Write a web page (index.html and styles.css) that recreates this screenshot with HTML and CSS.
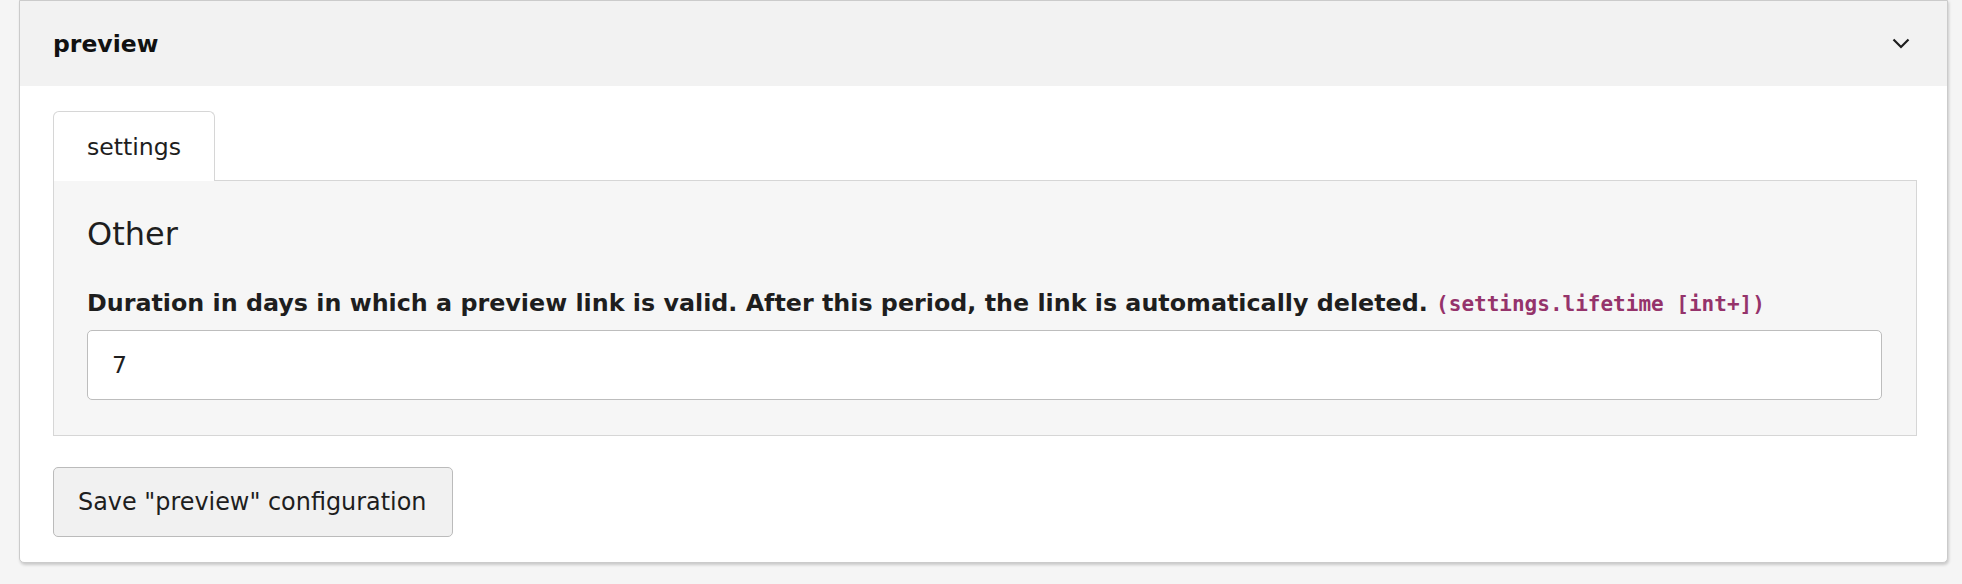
FILE: index.html
```html
<!DOCTYPE html>
<html lang="en">
<head>
<meta charset="utf-8">
<title>preview</title>
<link rel="stylesheet" href="styles.css">
</head>
<body>
<div class="page">
  <div class="card">
    <div class="card-header">
      <span class="card-title">preview</span>
      <svg class="chevron" width="18" height="11" viewBox="0 0 18 11"><polyline points="1.5,1.5 9,9 16.5,1.5" fill="none" stroke="#1e1e1e" stroke-width="2.2"/></svg>
    </div>
    <div class="card-body">
      <div class="tabs">
        <div class="tab active">settings</div>
      </div>
      <div class="tab-panel">
        <h2 class="section-title">Other</h2>
        <label class="field-label">Duration in days in which a preview link is valid. After this period, the link is automatically deleted. <code class="field-key">(settings.lifetime [int+])</code></label>
        <input class="field-input" type="text" value="7">
      </div>
      <button class="save-btn" type="button">Save "preview" configuration</button>
    </div>
  </div>
</div>
</body>
</html>
```

FILE: styles.css
```css
html, body {
  margin: 0;
  padding: 0;
  background: #f5f5f5;
}

body {
  font-family: Verdana, "DejaVu Sans", sans-serif;
  font-size: 23.6px;
  color: #1e1e1e;
}

.page {
  padding: 0 14px 22px 19px;
}

.card {
  background: #ffffff;
  border: 1px solid #cbcbcb;
  border-radius: 0 0 5px 5px;
  box-shadow: 1px 2px 3px rgba(0, 0, 0, 0.18);
}

.card-header {
  height: 85px;
  background: #f2f2f2;
  display: flex;
  align-items: center;
  justify-content: space-between;
  padding: 0 37px 0 33px;
}

.card-title {
  font-weight: bold;
  color: #111;
  font-size: 23.5px;
}

.chevron {
  display: block;
}

.card-body {
  padding: 25px 30px 25px 33px;
}

.tabs {
  display: flex;
}

.tab {
  background: #ffffff;
  border: 1px solid #d6d6d6;
  border-bottom: none;
  border-radius: 6px 6px 0 0;
  height: 70px;
  box-sizing: border-box;
  padding: 0 33px;
  display: flex;
  align-items: center;
  margin-bottom: -1px;
  position: relative;
  z-index: 1;
}

.tab-panel {
  background: #f6f6f6;
  border: 1px solid #d6d6d6;
  padding: 34px 34px 35px 33px;
}

.section-title {
  font-size: 32px;
  font-weight: normal;
  line-height: 1.2;
  margin: 0 0 36px;
  color: #1e1e1e;
}

.field-label {
  display: block;
  font-weight: bold;
  font-size: 23.8px;
  line-height: 1.2;
  margin-bottom: 12px;
}

.field-key {
  font-family: "DejaVu Sans Mono", monospace;
  font-size: 21px;
  font-weight: bold;
  color: #95336b;
}

.field-input {
  display: block;
  width: 100%;
  box-sizing: border-box;
  height: 70px;
  border: 1px solid #bdbdbd;
  border-radius: 5px;
  background: #ffffff;
  padding: 0 24px;
  font-family: inherit;
  font-size: 23.6px;
  color: #1e1e1e;
}

.save-btn {
  margin-top: 31px;
  width: 400px;
  height: 70px;
  box-sizing: border-box;
  background: #f1f1f1;
  border: 1px solid #bbbbbb;
  border-radius: 5px;
  font-family: inherit;
  font-size: 23.9px;
  color: #1e1e1e;
  padding: 0 24px;
  text-align: left;
}
```
